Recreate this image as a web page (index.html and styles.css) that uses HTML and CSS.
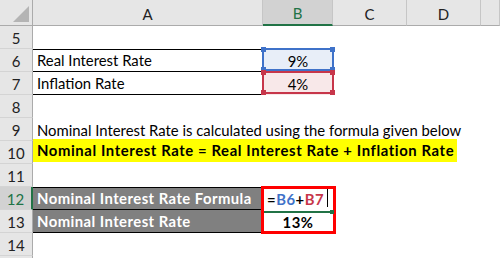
FILE: index.html
```html
<!DOCTYPE html>
<html>
<head>
<meta charset="utf-8">
<link rel="stylesheet" href="styles.css">
</head>
<body>
<div class="sheet">
  <div class="grid">
    <div class="hd corner"><span class="tri"></span></div>
    <div class="hd col">A</div>
    <div class="hd col sel">B</div>
    <div class="hd col">C</div>
    <div class="hd col">D</div>
    <div class="hd col last"></div>

    <div class="rh">5</div><div class="c"></div><div class="c"></div><div class="c"></div><div class="c"></div><div class="c"></div>

    <div class="rh">6</div><div class="c txt bt bb">Real Interest Rate</div><div class="c ctr fill-blue">9%</div><div class="c"></div><div class="c"></div><div class="c"></div>

    <div class="rh">7</div><div class="c txt bb">Inflation Rate</div><div class="c ctr fill-red">4%</div><div class="c"></div><div class="c"></div><div class="c"></div>

    <div class="rh">8</div><div class="c"></div><div class="c"></div><div class="c"></div><div class="c"></div><div class="c"></div>

    <div class="rh">9</div><div class="c txt span4">Nominal Interest Rate is calculated using the formula given below</div><div class="c"></div>

    <div class="rh">10</div><div class="c txt span4 yellowrow"><span class="yellow">Nominal Interest Rate = Real Interest Rate + Inflation Rate</span></div><div class="c"></div>

    <div class="rh">11</div><div class="c"></div><div class="c"></div><div class="c"></div><div class="c"></div><div class="c"></div>

    <div class="rh selrow">12</div><div class="c txt dark bt bb">Nominal Interest Rate Formula</div><div class="c formula"><span class="eq">=</span><span class="rb">B6</span><span class="eq">+</span><span class="rr">B7</span><span class="cursor"></span></div><div class="c"></div><div class="c"></div><div class="c"></div>

    <div class="rh">13</div><div class="c txt dark bb">Nominal Interest Rate</div><div class="c ctr bold">13%</div><div class="c"></div><div class="c"></div><div class="c"></div>

    <div class="rh">14</div><div class="c"></div><div class="c"></div><div class="c"></div><div class="c"></div><div class="c"></div>

    <div class="rh"></div><div class="c"></div><div class="c"></div><div class="c"></div><div class="c"></div><div class="c"></div>
  </div>

  <div class="range blue"><i class="h tl"></i><i class="h tr"></i><i class="h bl"></i><i class="h br"></i></div>
  <div class="range red"><i class="h tl"></i><i class="h tr"></i><i class="h bl"></i><i class="h br"></i></div>
  <div class="active"><span class="green"></span><span class="gdot"></span></div>
</div>
</body>
</html>
```

FILE: styles.css
```css
html, body {
  margin: 0;
  padding: 0;
  background: #fff;
}
body {
  width: 500px;
  height: 258px;
  overflow: hidden;
  font-family: Lato, "Liberation Sans", sans-serif;
  font-size: 14.85px;
  color: #000;
}
.sheet {
  position: relative;
  width: 500px;
  height: 258px;
  overflow: hidden;
}
.grid {
  display: grid;
  grid-template-columns: 33px 230px 70px 74px 74px 19px;
  grid-template-rows: 26px repeat(11, 23px);
}
.hd {
  background: #e6e6e6;
  border-bottom: 1px solid #ababab;
  box-sizing: border-box;
  display: flex;
  align-items: center;
  justify-content: center;
  color: #222;
  font-size: 15px;
  padding-top: 2px;
}
.col {
  border-right: 1px solid #c6c6c6;
}
.hd.sel {
  background: #d2d2d2;
  color: #217346;
  border-bottom: 2px solid #217346;
}
.corner {
  border-right: 1px solid #ababab;
  position: relative;
}
.tri {
  position: absolute;
  right: 3px;
  bottom: 3px;
  width: 0;
  height: 0;
  border-left: 16px solid transparent;
  border-bottom: 16px solid #b4b4b4;
}
.rh {
  background: #e6e6e6;
  border-right: 1px solid #ababab;
  border-bottom: 1px solid #d4d4d4;
  box-sizing: border-box;
  display: flex;
  align-items: flex-end;
  justify-content: center;
  padding-bottom: 1px;
  font-size: 15px;
  color: #222;
}
.rh.selrow {
  background: #d2d2d2;
  color: #217346;
  border-right: 2px solid #217346;
}
.c {
  box-sizing: border-box;
  display: flex;
  align-items: flex-end;
  padding-bottom: 2px;
  white-space: nowrap;
  overflow: visible;
}
.txt {
  padding-left: 4px;
}
.span4 {
  grid-column: span 4;
}
.bt { border-top: 1px solid #000; }
.bb { border-bottom: 1px solid #000; }
.ctr {
  justify-content: center;
}
.bold {
  font-weight: bold;
  letter-spacing: 0.5px;
}
.fill-blue { background: #e8eef8; }
.fill-red { background: #f8e8e9; }
.yellowrow {
  padding-left: 0;
}
.yellow {
  background: #ffff00;
  font-weight: bold;
  letter-spacing: 0.6px;
  display: block;
  height: 23px;
  width: 424px;
  box-sizing: border-box;
  padding-left: 4px;
  padding-top: 2px;
}
.dark {
  background: #808080;
  color: #fff;
  font-weight: bold;
  letter-spacing: 0.45px;
}
.formula {
  font-weight: bold;
  letter-spacing: 0.5px;
  padding-left: 4px;
  position: relative;
}
.eq { color: #000; }
.rb { color: #3f72c9; }
.rr { color: #c7364a; }
.cursor {
  display: inline-block;
  width: 1px;
  height: 19px;
  background: #000;
  margin-left: 3px;
  margin-bottom: 1px;
}
.range {
  position: absolute;
  left: 262px;
  width: 72px;
  height: 23px;
  box-sizing: border-box;
  border: 2px solid;
}
.range.blue {
  top: 48px;
  border-color: #3f72c9;
}
.range.red {
  top: 71px;
  border-color: #c7364a;
}
.h {
  position: absolute;
  width: 5px;
  height: 5px;
}
.blue .h { background: #3f72c9; }
.red .h { background: #c7364a; }
.tl { left: -3px; top: -3px; }
.tr { right: -3px; top: -3px; }
.bl { left: -3px; bottom: -3px; }
.br { right: -3px; bottom: -3px; }
.active {
  position: absolute;
  left: 261px;
  top: 186px;
  width: 75px;
  height: 48px;
  box-sizing: border-box;
  border: 3px solid #ff0000;
}
.green {
  position: absolute;
  left: 0;
  right: 2px;
  top: 22px;
  height: 2px;
  background: #217346;
}
.gdot {
  position: absolute;
  right: -1px;
  top: 21px;
  width: 4px;
  height: 4px;
  background: #217346;
}
```
